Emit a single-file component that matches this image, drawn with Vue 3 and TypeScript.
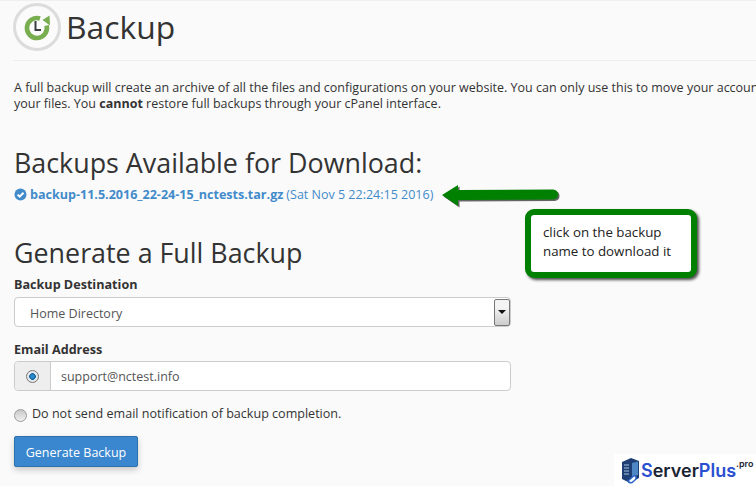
<script setup lang="ts">
const pageTitle = 'Backup'
</script>

<template>
  <div class="page">
    <header class="head">
      <svg class="logo" width="50" height="52" viewBox="0 0 50 52">
        <circle cx="25" cy="26" r="22.5" fill="#fbfbfb" stroke="#dcdcdc" stroke-width="3" />
        <path d="M28 17.5 A10 10 0 1 0 34.6 24.5" fill="none" stroke="#78ad50" stroke-width="4.6" />
        <path d="M30.5 19 L37.5 14.5 L38 24.5 Z" fill="#78ad50" />
        <path d="M23.5 20 V29 H29" fill="none" stroke="#3a3f45" stroke-width="2" />
      </svg>
      <h1>{{ pageTitle }}</h1>
    </header>
    <p class="intro">A full backup will create an archive of all the files and configurations on your website. You can only use this to move your account to another server or to keep a local copy of</p>
    <p class="intro intro-2">your files. You <b>cannot</b> restore full backups through your cPanel interface.</p>
    <h2 class="h-avail">Backups Available for Download:</h2>
    <div class="file">
      <svg width="13" height="13" viewBox="0 0 13 13"><circle cx="6.5" cy="6.5" r="6" fill="#428bca" /><path d="M3.6 6.6 L5.7 8.7 L9.5 4.8" fill="none" stroke="#fff" stroke-width="2" /></svg>
      <a class="file-link">backup-11.5.2016_22-24-15_nctests.tar.gz</a>
      <span class="file-date">(Sat Nov 5 22:24:15 2016)</span>
    </div>
    <h2 class="h-gen">Generate a Full Backup</h2>
    <label class="lbl">Backup Destination</label>
    <div class="select">
      <span class="sel-text">Home Directory</span>
      <span class="sel-btn"><i></i></span>
    </div>
    <label class="lbl lbl-mail">Email Address</label>
    <div class="input">
      <span class="addon"><span class="radio on"></span></span>
      <span class="val">support@nctest.info</span>
    </div>
    <div class="check">
      <span class="radio off"></span>
      <span class="check-text">Do not send email notification of backup completion.</span>
    </div>
    <button class="btn" type="button"><span>Generate Backup</span></button>

    <svg class="arrow" width="128" height="34" viewBox="0 0 128 34">
      <path d="M2 16 L18 6 L18 11 L113 10.5 Q118 11 118 15.5 Q118 20 113 20.5 L18 21 L18 27 Z" fill="#000" opacity=".6" transform="translate(1.5 1.5)" />
      <path d="M2 16 L18 6 L18 11 L113 10.5 Q118 11 118 15.5 Q118 20 113 20.5 L18 21 L18 27 Z" fill="#008000" />
    </svg>
    <div class="note">click on the backup<br />name to download it</div>
    <div class="brand">
      <svg width="19" height="27" viewBox="0 0 19 27">
        <path d="M1 5 L10 1 L18 4 V21 L9 26 L1 22 Z" fill="#1d3f73" />
        <path d="M11 6 L17 4.5 V18 L11 20 Z" fill="#4f86c6" />
        <path d="M3 8 H8 M3 11 H8 M3 14 H8 M3 17 H8" stroke="#a8c4e4" stroke-width="1" />
        <path d="M7 24 L12 19.5 Q14 18 15 20 Q15.5 22 13.5 23.5 L11 25.5 Q8.5 26.5 7 24 Z" fill="#fff" stroke="#2a62c8" stroke-width="1.5" />
      </svg>
      <span class="b-s">S</span><span class="b-e">erver</span><span class="b-p">Plus</span><span class="b-pro">.pro</span>
    </div>
  </div>
</template>

<style scoped>
.page {
  position: relative;
  width: 756px;
  height: 486px;
  overflow: hidden;
  box-sizing: border-box;
  padding: 0 0 0 14px;
  background: #fafafa;
  font-family: "Open Sans", sans-serif;
  font-size: 13px;
  color: #333;
  border-top: 1px solid #f0f0f0;
}
.head {
  display: flex;
  align-items: flex-start;
  height: 59px;
  border-bottom: 1px solid #eee;
  margin: 0 -14px 0 -1px;
}
.logo { margin-left: -1px; flex: none; }
h1 {
  margin: 3px 0 0 4px;
  font-size: 31.8px;
  line-height: 46px;
  font-weight: 400;
}
.intro {
  margin: 19px 0 0;
  width: 900px;
  white-space: nowrap;
  line-height: 16px;
  font-size: 12.5px;
}
.intro-2 { margin-top: 0; }
h2 {
  margin: 0;
  font-weight: 400;
  font-size: 26.85px;
  line-height: 34px;
}
.h-avail { margin-top: 34px; }
.file {
  display: flex;
  align-items: center;
  height: 20px;
  margin-top: 4px;
  gap: 3px;
}
.file-link { color: #428bca; font-weight: 700; font-size: 12.55px; }
.file-date { color: #428bca; font-size: 12.5px; }
.h-gen { margin-top: 32px; }
.lbl { display: block; font-weight: 700; font-size: 12.6px; line-height: 18px; margin-top: 6px; }
.lbl-mail { margin-top: 14px; }
.select, .input {
  width: 497px;
  box-sizing: border-box;
  height: 30px;
  border: 1px solid #ccc;
  border-radius: 4px;
  background: #fff;
  display: flex;
  align-items: center;
  font-size: 12.5px;
}
.select { margin-top: 3px; padding-left: 15px; justify-content: space-between; color: #555; }
.sel-text { padding-top: 2px; }
.input { margin-top: 2px; }
.sel-btn {
  width: 16px;
  height: 27px;
  box-sizing: border-box;
  border: 1px solid #777;
  border-radius: 2px;
  background: linear-gradient(#f4f4f4 30%, #ccc);
  display: flex;
  align-items: center;
  justify-content: center;
}
.sel-btn i {
  width: 0;
  height: 0;
  border-left: 4px solid transparent;
  border-right: 4px solid transparent;
  border-top: 4px solid #111;
}
.addon {
  width: 35px;
  height: 100%;
  background: #eee;
  border-right: 1px solid #ccc;
  border-radius: 4px 0 0 4px;
  display: flex;
  align-items: center;
  justify-content: center;
}
.val { padding-left: 10px; color: #555; }
.radio {
  width: 13px;
  height: 13px;
  border-radius: 50%;
  display: inline-block;
  box-sizing: border-box;
  flex: none;
}
.radio.on { background: radial-gradient(circle, #2b8ac8 0 1.5px, #0d5f9c 3px, #e4e8ee 3.6px); border: 1px solid #777; }
.radio.off { background: linear-gradient(#c8c8c8, #f0f0f0); border: 1px solid #9a9a9a; margin-top: 5px; }
.check {
  display: flex;
  gap: 5px;
  align-items: flex-start;
  margin-top: 13px;
  line-height: 18px;
  height: 18px;
  font-size: 12.55px;
}
.check-text { padding-top: 1px; }
.btn {
  display: block;
  margin-top: 14px;
  width: 124px;
  height: 31px;
  border: 1px solid #2d70ab;
  border-radius: 2px;
  background: #3a87cf;
  color: #fff;
  font: 12.5px "Open Sans", sans-serif;
  box-shadow: 0 3px 6px rgba(0, 0, 0, .2);
  padding: 2px 0 0;
}
.arrow { position: absolute; left: 440px; top: 178px; }
.note {
  position: absolute;
  left: 525px;
  top: 208px;
  width: 172px;
  height: 69px;
  box-sizing: border-box;
  border: 6px solid #008000;
  border-radius: 9px;
  background: #fff;
  padding: 8px 0 0 12px;
  color: #222;
  font-size: 13.3px;
  line-height: 19px;
  box-shadow: 2px 2px 3px rgba(0, 0, 0, .7);
}
.brand {
  position: absolute;
  left: 614px;
  top: 453px;
  width: 142px;
  height: 33px;
  background: #fff;
  display: flex;
  align-items: center;
  padding-left: 7px;
  box-sizing: border-box;
  font: 600 18px "Inter", sans-serif;
  color: #1a2433;
}
.b-s { color: #2a4fd0; margin-left: 1px; }
.b-p { color: #2a4fd0; }
.b-pro { font-size: 9px; align-self: flex-start; margin-top: 4px; }
</style>
